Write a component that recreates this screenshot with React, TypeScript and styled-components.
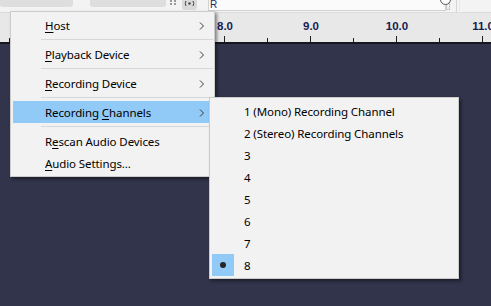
import React from "react";
import styled, { createGlobalStyle } from "styled-components";

const GlobalStyle = createGlobalStyle`
  html, body {
    margin: 0;
    padding: 0;
    background: #31344a;
  }
  body {
    font-family: "Noto Sans", "Open Sans", sans-serif;
  }
`;

const Page = styled.div`
  position: relative;
  width: 491px;
  height: 306px;
  overflow: hidden;
  display: flex;
  flex-direction: column;
`;

const TopStrip = styled.div`
  height: 13px;
  flex: none;
  display: flex;
  align-items: flex-start;
  background: #f3f3f3;
  border-bottom: 1px solid #dcdcdc;
  box-sizing: border-box;
`;

const ToolBox = styled.div<{ $w: number; $ml: number }>`
  width: ${(p) => p.$w}px;
  margin-left: ${(p) => p.$ml}px;
  height: 7px;
  background: #dedede;
  border-radius: 0 0 3px 3px;
`;

const Grip = styled.div`
  margin-left: 4px;
  width: 6px;
  height: 3px;
  border-left: 2px dotted #9a9a9a;
  border-right: 2px dotted #9a9a9a;
  box-sizing: border-box;
`;

const MeterButton = styled.div`
  margin-left: 6px;
  width: 15px;
  height: 10px;
  background: #d9d9d9;
  border-radius: 0 0 3px 3px;
  display: flex;
  justify-content: center;
`;

const MeterField = styled.div`
  margin-left: 11px;
  width: 238px;
  height: 11px;
  background: #fbfbfb;
  border: 1px solid #d0d0d0;
  border-top: none;
  box-sizing: border-box;
  display: flex;
  align-items: flex-start;
`;

const ChannelLetter = styled.span`
  font-family: "Liberation Sans", Arial, sans-serif;
  font-size: 10px;
  line-height: 10px;
  color: #1b2a6b;
  margin-left: 1px;
`;

const Knob = styled.div`
  width: 4px;
  height: 10px;
  border: 1px solid #c8c8c8;
  border-top: none;
  box-sizing: border-box;
  position: relative;
`;

const KnobRing = styled.div`
  position: absolute;
  left: -7px;
  top: -6px;
  width: 9px;
  height: 9px;
  border-radius: 50%;
  border: 1px solid #555;
  background: #fff;
`;

const Divider = styled.div`
  margin-left: 6px;
  width: 2px;
  height: 13px;
  border-left: 1px solid #d6d6d6;
  border-right: 1px solid #e8e8e8;
`;

const Ruler = styled.div`
  position: relative;
  height: 29px;
  flex: none;
  background: #e8e8e8;
  border-bottom: 2px solid #17181f;
`;

const RulerLabel = styled.span`
  position: absolute;
  top: 7px;
  transform: translateX(-50%);
  font-family: "Liberation Sans", Arial, sans-serif;
  font-weight: bold;
  font-size: 11.5px;
  color: #161c52;
`;

const TickLayer = styled.svg`
  position: absolute;
  left: 0;
  bottom: 0;
`;

const Track = styled.div`
  flex: 1;
  background: #31344a;
`;

const MenuPanel = styled.div<{ $left: number; $top: number; $width: number }>`
  position: absolute;
  left: ${(p) => p.$left}px;
  top: ${(p) => p.$top}px;
  width: ${(p) => p.$width}px;
  box-sizing: border-box;
  padding: 2px 0;
  background: #f2f2f2;
  border: 1px solid #cccccc;
  box-shadow: 2px 2px 3px rgba(0, 0, 0, 0.45);
  font-size: 11.5px;
  color: #000;
`;

const Item = styled.div<{ $active?: boolean }>`
  position: relative;
  height: 22px;
  margin: 0 2px;
  display: flex;
  align-items: center;
  background: ${(p) => (p.$active ? "#91c9f7" : "transparent")};
`;

const CheckCell = styled.div<{ $checked?: boolean }>`
  width: 22px;
  height: 22px;
  flex: none;
  display: flex;
  align-items: center;
  justify-content: center;
  background: ${(p) => (p.$checked ? "#91c9f7" : "transparent")};
`;

const Dot = styled.div`
  width: 6px;
  height: 6px;
  border-radius: 50%;
  background: #262626;
`;

const Label = styled.span`
  margin-left: 10px;
  margin-top: 2px;
  white-space: nowrap;
  line-height: 20px;
  letter-spacing: -0.1px;
`;

const Key = styled.span`
  text-decoration: underline;
  text-underline-offset: 2px;
  text-decoration-thickness: 1px;
`;

const Arrow = styled.svg`
  position: absolute;
  right: 7px;
  top: 8px;
`;

const Separator = styled.div`
  height: 7px;
  margin: 0 1px 0 30px;
  display: flex;
  align-items: center;
  &::after {
    content: "";
    flex: 1;
    height: 1px;
    background: #d7d7d7;
  }
`;

type Entry =
  | { sep: true }
  | { sep?: false; before: string; key: string; after: string; sub?: boolean; active?: boolean };

const mainItems: Entry[] = [
  { before: "", key: "H", after: "ost", sub: true },
  { sep: true },
  { before: "", key: "P", after: "layback Device", sub: true },
  { sep: true },
  { before: "", key: "R", after: "ecording Device", sub: true },
  { sep: true },
  { before: "Recording ", key: "C", after: "hannels", sub: true, active: true },
  { sep: true },
  { before: "R", key: "e", after: "scan Audio Devices" },
  { before: "", key: "A", after: "udio Settings..." },
];

const channelItems = [
  "1 (Mono) Recording Channel",
  "2 (Stereo) Recording Channels",
  "3",
  "4",
  "5",
  "6",
  "7",
  "8",
];

const PX_PER_SEC = 86;
const ORIGIN = 224;

function RulerBar() {
  const ticks: { x: number; major: boolean }[] = [];
  for (let k = -10; k <= 8; k++) {
    const x = ORIGIN + (k * PX_PER_SEC) / 2;
    if (x >= 0 && x <= 491) ticks.push({ x: Math.round(x), major: k % 2 === 0 });
  }
  const labels = [8, 9, 10, 11];
  return (
    <Ruler>
      {labels.map((s, i) => (
        <RulerLabel key={s} style={{ left: ORIGIN + i * PX_PER_SEC + 1 }}>
          {s.toFixed(1)}
        </RulerLabel>
      ))}
      <TickLayer width={491} height={6}>
        {ticks.map((t) => (
          <line
            key={t.x}
            x1={t.x + 0.5}
            x2={t.x + 0.5}
            y1={t.major ? 0 : 2}
            y2={6}
            stroke="#1d1d24"
            strokeWidth={1}
          />
        ))}
      </TickLayer>
    </Ruler>
  );
}

function Chevron() {
  return (
    <Arrow width="6" height="8" viewBox="0 0 6 8">
      <path d="M1 0.5 L4.5 4 L1 7.5" fill="none" stroke="#3a3a3a" strokeWidth="1" />
    </Arrow>
  );
}

export default function App() {
  return (
    <>
      <GlobalStyle />
      <Page>
        <TopStrip>
          <ToolBox $w={73} $ml={0} />
          <ToolBox $w={76} $ml={17} />
          <Grip />
          <MeterButton>
            <svg width="11" height="8" viewBox="0 0 11 8">
              <path d="M2 1 Q0.5 3.5 2 6" fill="none" stroke="#444" />
              <path d="M9 1 Q10.5 3.5 9 6" fill="none" stroke="#444" />
              <circle cx="5.5" cy="3.5" r="1.2" fill="#444" />
            </svg>
          </MeterButton>
          <MeterField>
            <ChannelLetter>R</ChannelLetter>
          </MeterField>
          <Knob>
            <KnobRing />
          </Knob>
          <Divider />
        </TopStrip>
        <RulerBar />
        <Track />

        <MenuPanel $left={10} $top={11} $width={205}>
          {mainItems.map((it, i) =>
            it.sep ? (
              <Separator key={i} />
            ) : (
              <Item key={i} $active={it.active}>
                <CheckCell />
                <Label>
                  {it.before}
                  <Key>{it.key}</Key>
                  {it.after}
                </Label>
                {it.sub && <Chevron />}
              </Item>
            )
          )}
        </MenuPanel>

        <MenuPanel $left={209} $top={97} $width={250}>
          {channelItems.map((label, i) => (
            <Item key={label}>
              <CheckCell $checked={i === 7}>{i === 7 && <Dot />}</CheckCell>
              <Label>{label}</Label>
            </Item>
          ))}
        </MenuPanel>
      </Page>
    </>
  );
}
